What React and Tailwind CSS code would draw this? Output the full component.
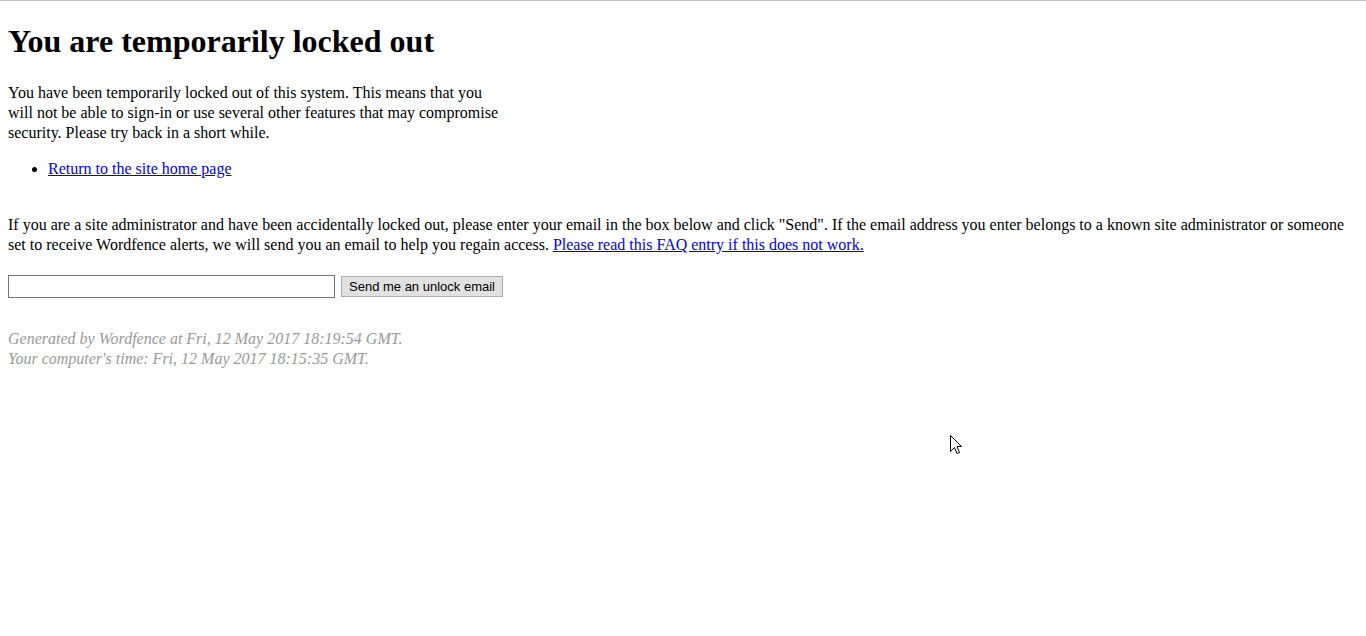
import React from 'react';

export default function App() {
   return (
      <div className="relative min-h-screen bg-white border-t border-[#c3c3c3] px-2 text-black text-[16px] leading-[20px] font-['Liberation_Serif',serif]">
         <h1 className="pt-[22px] text-[32px] leading-[37px] font-bold">You are temporarily locked out</h1>
         <p className="mt-[23px] w-[500px]">
            You have been temporarily locked out of this system. This means that you will not be able to sign-in or use several other features that may compromise security. Please try back in a short while.
         </p>
         <ul className="mt-4 pl-10 list-disc">
            <li>
               <a href="#" className="text-[#0000ee] underline">Return to the site home page</a>
            </li>
         </ul>
         <p className="mt-[36px]">
            If you are a site administrator and have been accidentally locked out, please enter your email in the box below and click "Send". If the email address you enter belongs to a known site administrator or someone set to receive Wordfence alerts, we will send you an email to help you regain access.{' '}
            <a href="#" className="text-[#0000ee] underline">Please read this FAQ entry if this does not work.</a>
         </p>
         <form className="mt-[20px] flex items-center gap-[6px]" onSubmit={(e) => e.preventDefault()}>
            <input type="text" className="w-[327px] h-[23px] border border-[#767676] bg-white px-1 text-[13px] outline-none" />
            <button
               type="submit"
               className="h-[21px] px-[7px] border border-[#adadad] bg-[#e1e1e1] text-[13px] leading-[19px] font-['Liberation_Sans',Arial,sans-serif]"
            >
               Send me an unlock email
            </button>
         </form>
         <div className="mt-[31px] italic text-[#999999]">
            Generated by Wordfence at Fri, 12 May 2017 18:19:54 GMT.<br />
            Your computer's time: Fri, 12 May 2017 18:15:35 GMT.
         </div>
         <svg className="absolute left-[950px] top-[434px]" width="13" height="21" viewBox="0 0 13 21">
            <path d="M0.5 0.5 L0.5 16.5 L4.5 12.5 L7 18.5 L9.5 17.5 L7 11.5 L11.5 11.5 Z" fill="#fff" stroke="#000" strokeWidth="1" />
         </svg>
      </div>
   )
}
